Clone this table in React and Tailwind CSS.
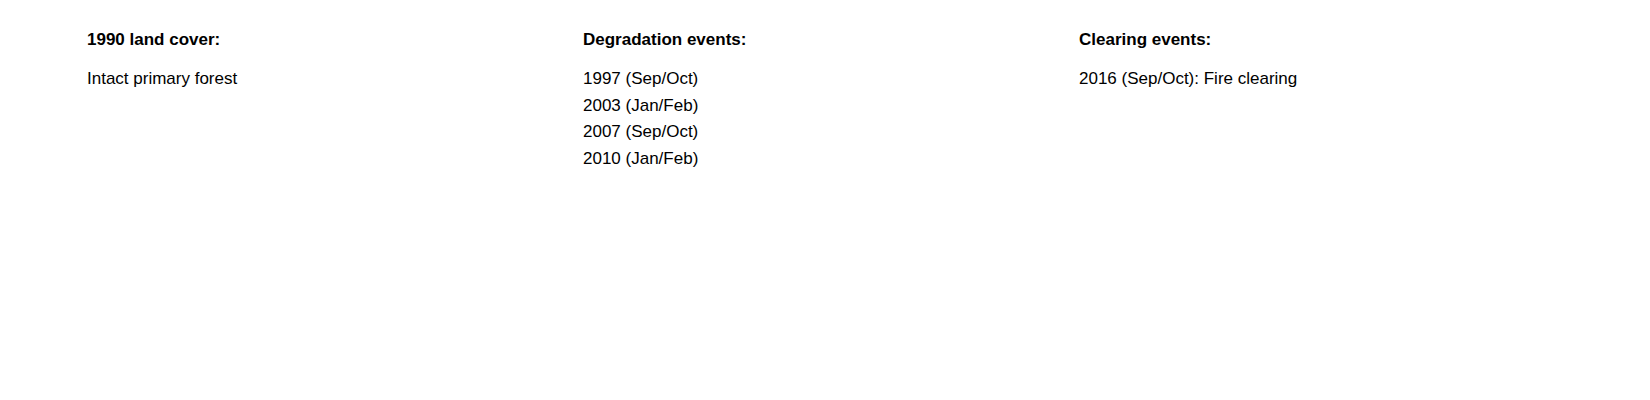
import React from 'react';

const columns = [
  { title: '1990 land cover:', items: ['Intact primary forest'] },
  {
    title: 'Degradation events:',
    items: ['1997 (Sep/Oct)', '2003 (Jan/Feb)', '2007 (Sep/Oct)', '2010 (Jan/Feb)'],
  },
  { title: 'Clearing events:', items: ['2016 (Sep/Oct): Fire clearing'] },
];

export default function App() {
  return (
    <div className="w-[1650px] h-[400px] bg-white text-black font-['Liberation_Sans',Arial,sans-serif] text-[17px] leading-[26.8px]">
      <div className="flex pl-[87px] pt-[27px]">
        {columns.map((col) => (
          <div key={col.title} className="w-[496px]">
            <h3 className="font-bold mb-[12px]">{col.title}</h3>
            <ul>
              {col.items.map((item) => (
                <li key={item}>{item}</li>
              ))}
            </ul>
          </div>
        ))}
      </div>
    </div>
  );
}
